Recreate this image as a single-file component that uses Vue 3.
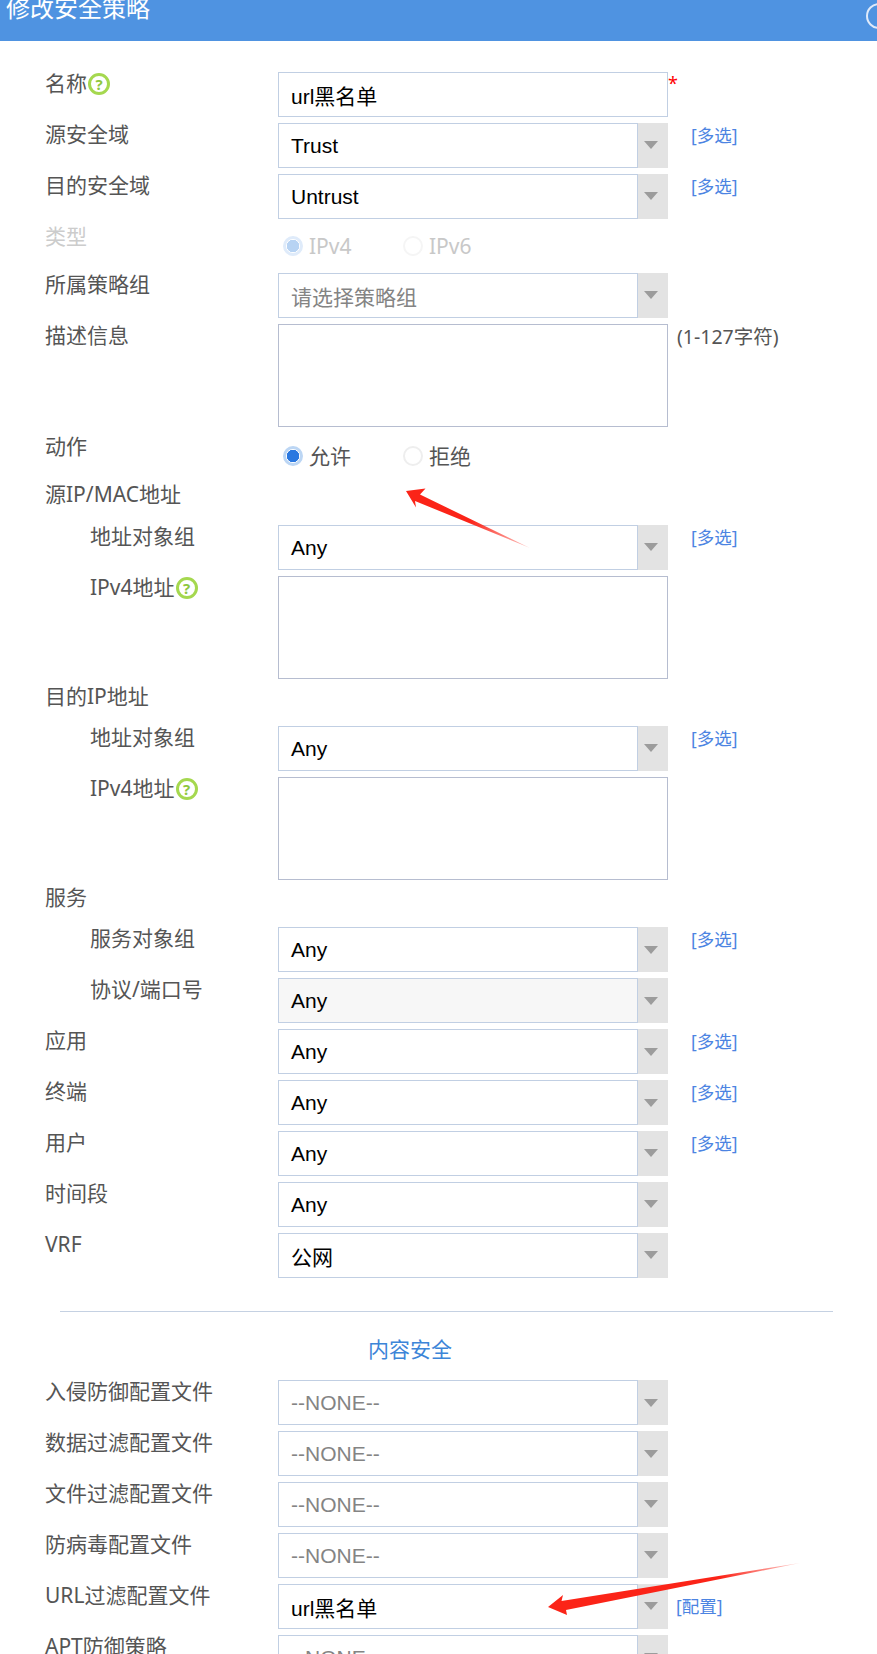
<script setup>
const top = [
  { t: 'input', label: '名称', help: true, value: 'url黑名单', star: true },
  { t: 'select', label: '源安全域', value: 'Trust', link: '[多选]' },
  { t: 'select', label: '目的安全域', value: 'Untrust', link: '[多选]' },
  { t: 'type', label: '类型' },
  { t: 'select', label: '所属策略组', value: '请选择策略组', dim: true },
  { t: 'area', label: '描述信息', hint: '(1-127字符)' },
  { t: 'action', label: '动作' },
  { t: 'section', label: '源IP/MAC地址', cls: 'sec-a' },
  { t: 'select', label: '地址对象组', value: 'Any', link: '[多选]', sub: true },
  { t: 'area', label: 'IPv4地址', help: true, sub: true },
  { t: 'section', label: '目的IP地址', cls: 'sec-b' },
  { t: 'select', label: '地址对象组', value: 'Any', link: '[多选]', sub: true },
  { t: 'area', label: 'IPv4地址', help: true, sub: true },
  { t: 'section', label: '服务', cls: 'sec-c' },
  { t: 'select', label: '服务对象组', value: 'Any', link: '[多选]', sub: true },
  { t: 'select', label: '协议/端口号', value: 'Any', sub: true, gray: true },
  { t: 'select', label: '应用', value: 'Any', link: '[多选]' },
  { t: 'select', label: '终端', value: 'Any', link: '[多选]' },
  { t: 'select', label: '用户', value: 'Any', link: '[多选]' },
  { t: 'select', label: '时间段', value: 'Any' },
  { t: 'select', label: 'VRF', value: '公网' },
]
const bottom = [
  { t: 'select', label: '入侵防御配置文件', value: '--NONE--', dim: true },
  { t: 'select', label: '数据过滤配置文件', value: '--NONE--', dim: true },
  { t: 'select', label: '文件过滤配置文件', value: '--NONE--', dim: true },
  { t: 'select', label: '防病毒配置文件', value: '--NONE--', dim: true },
  { t: 'select', label: 'URL过滤配置文件', value: 'url黑名单', config: '[配置]' },
  { t: 'select', label: 'APT防御策略', value: '--NONE--', dim: true },
]
const groups = [top, bottom]
</script>

<template>
  <div class="page">
    <header class="bar">
      <span class="title">修改安全策略</span>
      <span class="close"></span>
    </header>
    <main class="form">
      <template v-for="(rows, g) in groups" :key="g">
        <div v-if="g === 1" class="content-head">
          <div class="rule"></div>
          <div class="content-title">内容安全</div>
        </div>
        <div class="rows">
          <div v-for="(r, i) in rows" :key="i" class="row" :class="['row-' + r.t, r.cls]">
            <div class="label" :class="{ sub: r.sub, off: r.t === 'type' }">
              {{ r.label }}<span v-if="r.help" class="help">?</span>
            </div>
            <template v-if="r.t === 'input'">
              <div class="box full"><span class="val">{{ r.value }}</span></div>
              <span class="star">*</span>
            </template>
            <template v-else-if="r.t === 'select'">
              <div class="select">
                <div class="box" :class="{ gray: r.gray }">
                  <span class="val" :class="{ dim: r.dim }">{{ r.value }}</span>
                </div>
                <div class="drop"><i class="tri"></i></div>
              </div>
              <a v-if="r.link" class="link">{{ r.link }}</a>
              <a v-if="r.config" class="link cfg">{{ r.config }}</a>
            </template>
            <template v-else-if="r.t === 'area'">
              <div class="box full tall"></div>
              <span v-if="r.hint" class="hint">{{ r.hint }}</span>
            </template>
            <div v-else-if="r.t === 'type'" class="radios off">
              <span class="radio"><i class="dot on"></i>IPv4</span>
              <span class="radio"><i class="dot"></i>IPv6</span>
            </div>
            <div v-else-if="r.t === 'action'" class="radios">
              <span class="radio"><i class="dot on"></i>允许</span>
              <span class="radio"><i class="dot"></i>拒绝</span>
            </div>
          </div>
        </div>
      </template>
    </main>
    <svg class="marks" width="877" height="1654" viewBox="0 0 877 1654">
      <defs>
        <linearGradient id="f1" gradientUnits="userSpaceOnUse" x1="470" y1="520" x2="530" y2="548">
          <stop offset="0" stop-color="#fb2418" />
          <stop offset="1" stop-color="#fb2418" stop-opacity=".25" />
        </linearGradient>
        <linearGradient id="f2" gradientUnits="userSpaceOnUse" x1="720" y1="1576" x2="800" y2="1563">
          <stop offset="0" stop-color="#fb2418" />
          <stop offset="1" stop-color="#fb2418" stop-opacity=".2" />
        </linearGradient>
      </defs>
      <polygon points="406,491 425.5,488.5 420,494.5 530,548 415,501 416,507.5" fill="url(#f1)" />
      <polygon points="548,1607 563,1595 561.5,1601 800,1563 566,1610 567,1615" fill="url(#f2)" />
    </svg>
  </div>
</template>

<style>
html, body { margin: 0; background: #fff; }
</style>

<style scoped>
.page {
  position: relative;
  width: 877px;
  height: 1654px;
  overflow: hidden;
  background: #fff;
  font-family: "Noto Sans", "Noto Sans CJK SC", sans-serif;
  font-size: 21px;
  color: #555;
}
.bar {
  display: flex;
  justify-content: space-between;
  height: 41px;
  background: #4f93e1;
  overflow: hidden;
  padding-left: 6px;
  box-sizing: border-box;
}
.title {
  color: #fff;
  font-size: 24px;
  line-height: 22px;
  height: 22px;
  margin-top: -3px;
}
.close {
  flex: none;
  width: 22px;
  height: 22px;
  margin: 3px -15px 0 0;
  border: 2px solid #dfeafa;
  border-radius: 50%;
}
.form { padding-top: 31px; }
.rows { display: flex; flex-direction: column; gap: 6px; }
.row {
  display: flex;
  align-items: flex-start;
  height: 44.9px;
  padding-left: 45px;
}
.row-type { height: 42px; }
.row-area { height: 103.5px; }
.row-action { height: 43px; }
.sec-a { height: 36.6px; }
.sec-b { height: 35px; }
.sec-c { height: 35px; }
.label {
  flex: none;
  display: flex;
  align-items: center;
  width: 233px;
  height: 24px;
  margin-top: -1px;
  line-height: 24px;
  white-space: nowrap;
}
.row-action .label { margin-top: 1px; }
.sec-a .label { margin-top: 0; }
.label.sub { padding-left: 45px; box-sizing: border-box; }
.label.off { color: #ccc; }
.help {
  flex: none;
  box-sizing: border-box;
  width: 22px;
  height: 22px;
  margin: 2px 0 0 1px;
  border: 3px solid #a5d84f;
  border-radius: 50%;
  color: #8fc73e;
  font: bold 15px/16px "Noto Sans", sans-serif;
  text-align: center;
}
.select { flex: none; display: flex; width: 390px; height: 100%; }
.box {
  box-sizing: border-box;
  flex: 1;
  display: flex;
  align-items: center;
  padding-left: 12px;
  height: 100%;
  border: 1.5px solid #c1cfe3;
  background: #fff;
}
.box.full { flex: none; width: 390px; }
.box.gray { background: #f7f7f7; }
.box.tall { border-color: #b6bdd0; }
.val {
  margin-top: 1px;
  font-family: "Liberation Sans", "Noto Sans CJK SC", sans-serif;
  font-size: 21px;
  color: #000;
  white-space: nowrap;
}
.val.dim { color: #848484; }
.drop {
  flex: none;
  width: 30px;
  display: flex;
  align-items: center;
  justify-content: center;
  padding-right: 4px;
  box-sizing: border-box;
  background: #e3e3e3;
}
.tri {
  width: 0;
  height: 0;
  border-left: 7px solid transparent;
  border-right: 7px solid transparent;
  border-top: 8px solid #9c9c9c;
}
.star {
  color: #f00;
  font-size: 18px;
  line-height: 18px;
  margin: 2px 0 0 0;
}
.link {
  margin: -1px 0 0 23px;
  font-size: 17.5px;
  line-height: 26px;
  color: #4c84e2;
  white-space: nowrap;
}
.link.cfg { margin: 9px 0 0 8px; }
.hint {
  margin: 0 0 0 9px;
  font-size: 19.5px;
  line-height: 26px;
  color: #555;
}
.radios {
  display: flex;
  padding-top: 9px;
  height: 28px;
  color: #555;
}
.radios.off { padding-top: 7px; color: #c8c8c8; }
.radio {
  display: flex;
  align-items: center;
  width: 120px;
  padding-left: 5px;
  box-sizing: border-box;
  line-height: 28px;
  white-space: nowrap;
}
.dot {
  box-sizing: border-box;
  flex: none;
  width: 20px;
  height: 20px;
  margin-right: 6px;
  border-radius: 50%;
  border: 2px solid #eeeeee;
  background: #fff;
}
.dot.on {
  border: 3px solid #bcd6f4;
  background: radial-gradient(circle, #2a78e0 0 6px, #fff 6.5px);
}
.radios.off .dot { border-color: #f5f5f5; }
.radios.off .dot.on {
  border-color: #dfebfa;
  background: radial-gradient(circle, #b7d3f3 0 6px, #fff 6.5px);
}
.content-head { padding-top: 33.5px; }
.rule {
  height: 1px;
  margin: 0 44px 0 60px;
  background: #c5d1e2;
}
.content-title {
  width: 84px;
  margin: 23px 0 17px 368px;
  line-height: 28px;
  color: #3c85d8;
  white-space: nowrap;
}
.marks {
  position: absolute;
  left: 0;
  top: 0;
  pointer-events: none;
}
</style>
